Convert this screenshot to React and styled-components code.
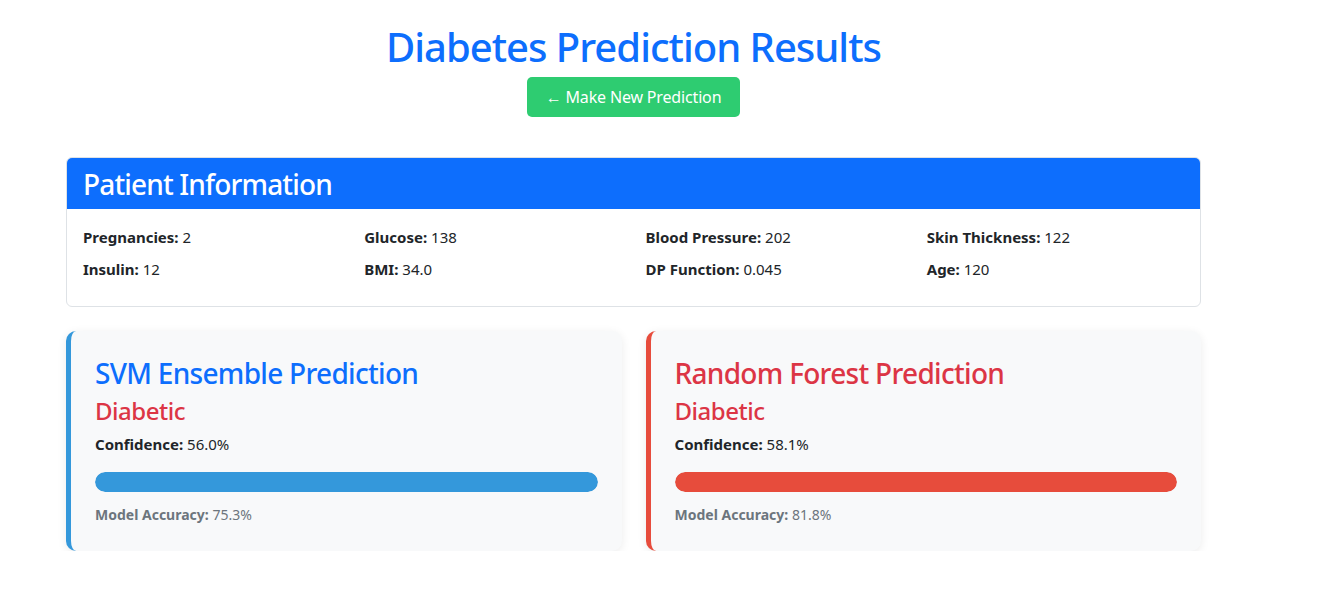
import styled, { createGlobalStyle } from 'styled-components';

const GlobalStyle = createGlobalStyle`
  * { box-sizing: border-box; }
  body {
    margin: 0;
    background: #fff;
    color: #212529;
    font-family: "Segoe UI", "Noto Sans", sans-serif;
    font-size: 16px;
    line-height: 1.5;
  }
`;

const Page = styled.div`
  width: 1135px;
  margin-left: 66px;
  padding-top: 23px;
`;

const Header = styled.div`
  display: flex;
  flex-direction: column;
  align-items: center;
  margin-bottom: 40px;
`;

const Title = styled.h1`
  margin: 0 0 6px;
  font-size: 40px;
  font-weight: 500;
  line-height: 1.2;
  letter-spacing: -0.025em;
  color: #0d6efd;
`;

const NewButton = styled.button`
  height: 40px;
  padding: 0 19px;
  border: none;
  border-radius: 5px;
  background: #2ecc71;
  color: #fff;
  font-family: inherit;
  font-size: 16px;
  letter-spacing: -0.01em;
  cursor: pointer;
`;

const InfoCard = styled.section`
  border: 1px solid #dee2e6;
  border-radius: 6px;
  overflow: hidden;
  margin-bottom: 24px;
`;

const InfoHeader = styled.div`
  background: #0d6efd;
  color: #fff;
  height: 51px;
  padding: 3px 16px 0;
  display: flex;
  align-items: center;
`;

const InfoTitle = styled.h3`
  margin: 0;
  font-size: 28px;
  font-weight: 500;
  line-height: 1.2;
  letter-spacing: -0.03em;
`;

const InfoBody = styled.div`
  display: grid;
  grid-template-columns: repeat(4, 1fr);
  column-gap: 24px;
  row-gap: 8px;
  margin: 0 -12px;
  padding: 16px 28px 25px;
  width: calc(100% + 24px);
`;

const Field = styled.p`
  margin: 0;
  font-size: 15px;
  line-height: 24px;

  strong {
    font-weight: 700;
  }
`;

const Predictions = styled.div`
  display: grid;
  grid-template-columns: 1fr 1fr;
  gap: 24px;
`;

const PredictionCard = styled.div`
  background: #f8f9fa;
  border-left: 5px solid ${(p) => p.$accent};
  border-radius: 10px;
  padding: 26px 24px 26px;
  box-shadow: 0 2px 10px rgba(0, 0, 0, 0.08);
`;

const ModelName = styled.h3`
  margin: 0 0 6px;
  font-size: 28px;
  font-weight: 500;
  line-height: 1.2;
  letter-spacing: -0.025em;
  color: ${(p) => p.$color};
`;

const Outcome = styled.h4`
  margin: 0 0 7px;
  font-size: 24px;
  font-weight: 500;
  line-height: 1.2;
  letter-spacing: -0.02em;
  color: #dc3545;
`;

const Confidence = styled.p`
  margin: 0 0 16px;
  font-size: 15px;
  line-height: 24px;
`;

const Track = styled.div`
  height: 20px;
  border-radius: 10px;
  background: #e9ecef;
  overflow: hidden;
  margin-bottom: 12px;
`;

const Fill = styled.div`
  height: 100%;
  background: ${(p) => p.$color};
  border-radius: 10px;
`;

const Accuracy = styled.small`
  display: block;
  font-size: 14px;
  line-height: 21px;
  color: #6c757d;
`;

const fields = [
  ['Pregnancies', '2'],
  ['Glucose', '138'],
  ['Blood Pressure', '202'],
  ['Skin Thickness', '122'],
  ['Insulin', '12'],
  ['BMI', '34.0'],
  ['DP Function', '0.045'],
  ['Age', '120'],
];

const models = [
  {
    name: 'SVM Ensemble Prediction',
    titleColor: '#0d6efd',
    accent: '#3498db',
    confidence: '56.0%',
    accuracy: '75.3%',
  },
  {
    name: 'Random Forest Prediction',
    titleColor: '#dc3545',
    accent: '#e74c3c',
    confidence: '58.1%',
    accuracy: '81.8%',
  },
];

export default function App() {
  return (
    <>
      <GlobalStyle />
      <Page>
        <Header>
          <Title>Diabetes Prediction Results</Title>
          <NewButton>← Make New Prediction</NewButton>
        </Header>

        <InfoCard>
          <InfoHeader>
            <InfoTitle>Patient Information</InfoTitle>
          </InfoHeader>
          <InfoBody>
            {fields.map(([label, value]) => (
              <Field key={label}>
                <strong>{label}:</strong> {value}
              </Field>
            ))}
          </InfoBody>
        </InfoCard>

        <Predictions>
          {models.map((m) => (
            <PredictionCard key={m.name} $accent={m.accent}>
              <ModelName $color={m.titleColor}>{m.name}</ModelName>
              <Outcome>Diabetic</Outcome>
              <Confidence>
                <strong>Confidence:</strong> {m.confidence}
              </Confidence>
              <Track>
                <Fill $color={m.accent} style={{ width: '100%' }} />
              </Track>
              <Accuracy>
                <strong>Model Accuracy:</strong> {m.accuracy}
              </Accuracy>
            </PredictionCard>
          ))}
        </Predictions>
      </Page>
    </>
  );
}
